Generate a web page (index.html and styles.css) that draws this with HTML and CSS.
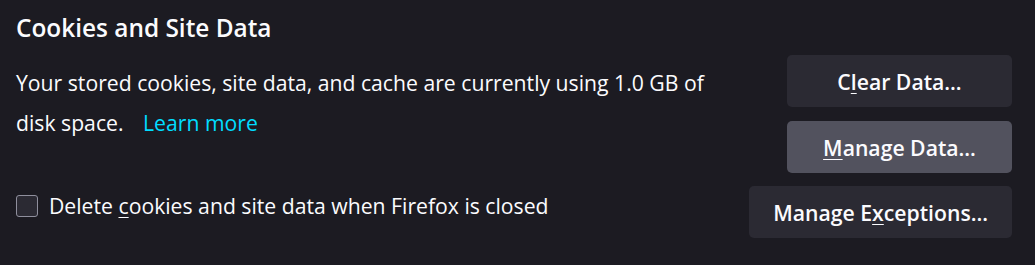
FILE: index.html
```html
<!DOCTYPE html>
<html>
<head>
<meta charset="utf-8">
<link rel="stylesheet" href="styles.css">
</head>
<body>
<section class="section">
  <h2 class="title">Cookies and Site Data</h2>
  <div class="row row-top">
    <div class="desc"><span>Your stored cookies, site data, and cache are currently using 1.0 GB of</span> <span>disk space.</span> <a class="link" href="#">Learn more</a></div>
    <div class="buttons">
      <button class="btn">C<u>l</u>ear Data…</button>
      <button class="btn btn-hover"><u>M</u>anage Data…</button>
    </div>
  </div>
  <div class="row row-bottom">
    <label class="check">
      <span class="box"></span>
      <span class="check-label">Delete <u>c</u>ookies and site data when Firefox is closed</span>
    </label>
    <button class="btn btn-wide">Manage E<u>x</u>ceptions…</button>
  </div>
</section>
</body>
</html>
```

FILE: styles.css
```css
html, body {
  margin: 0;
  padding: 0;
  background: #1c1b22;
}
body {
  width: 1035px;
  height: 265px;
  overflow: hidden;
  font-family: "Open Sans", "Noto Sans", sans-serif;
  color: #fbfbfe;
}
.section {
  padding: 12px 23px 0 16px;
}
.title {
  margin: 0;
  font-size: 24.4px;
  font-weight: 600;
  line-height: 32px;
}
.row {
  display: flex;
  justify-content: space-between;
}
.row-top {
  margin-top: 11px;
}
.desc {
  margin: 8px 0 0 0;
  width: 705px;
  font-size: 21.2px;
  line-height: 40px;
}
.link {
  color: #00ddff;
  text-decoration: none;
  margin-left: 14px;
}
.buttons {
  display: flex;
  flex-direction: column;
  gap: 14px;
}
.btn {
  font-family: inherit;
  font-size: 21.2px;
  font-weight: 600;
  color: #fbfbfe;
  background: #2b2a33;
  border: none;
  border-radius: 5px;
  height: 52px;
  min-width: 225px;
  padding: 0 24px;
}
.btn-hover {
  background: #52525e;
}
.btn u {
  text-decoration-thickness: 1px;
  text-underline-offset: 3px;
}
.row-bottom {
  margin-top: 13px;
  align-items: flex-start;
}
.check {
  display: flex;
  align-items: center;
  gap: 11px;
  margin-top: 5px;
  font-size: 21.2px;
}
.box {
  width: 22px;
  height: 22px;
  box-sizing: border-box;
  border: 1px solid #8f8f9d;
  border-radius: 3px;
  background: #2b2a33;
}
.check-label u {
  text-decoration-thickness: 1px;
  text-underline-offset: 3px;
}
```
